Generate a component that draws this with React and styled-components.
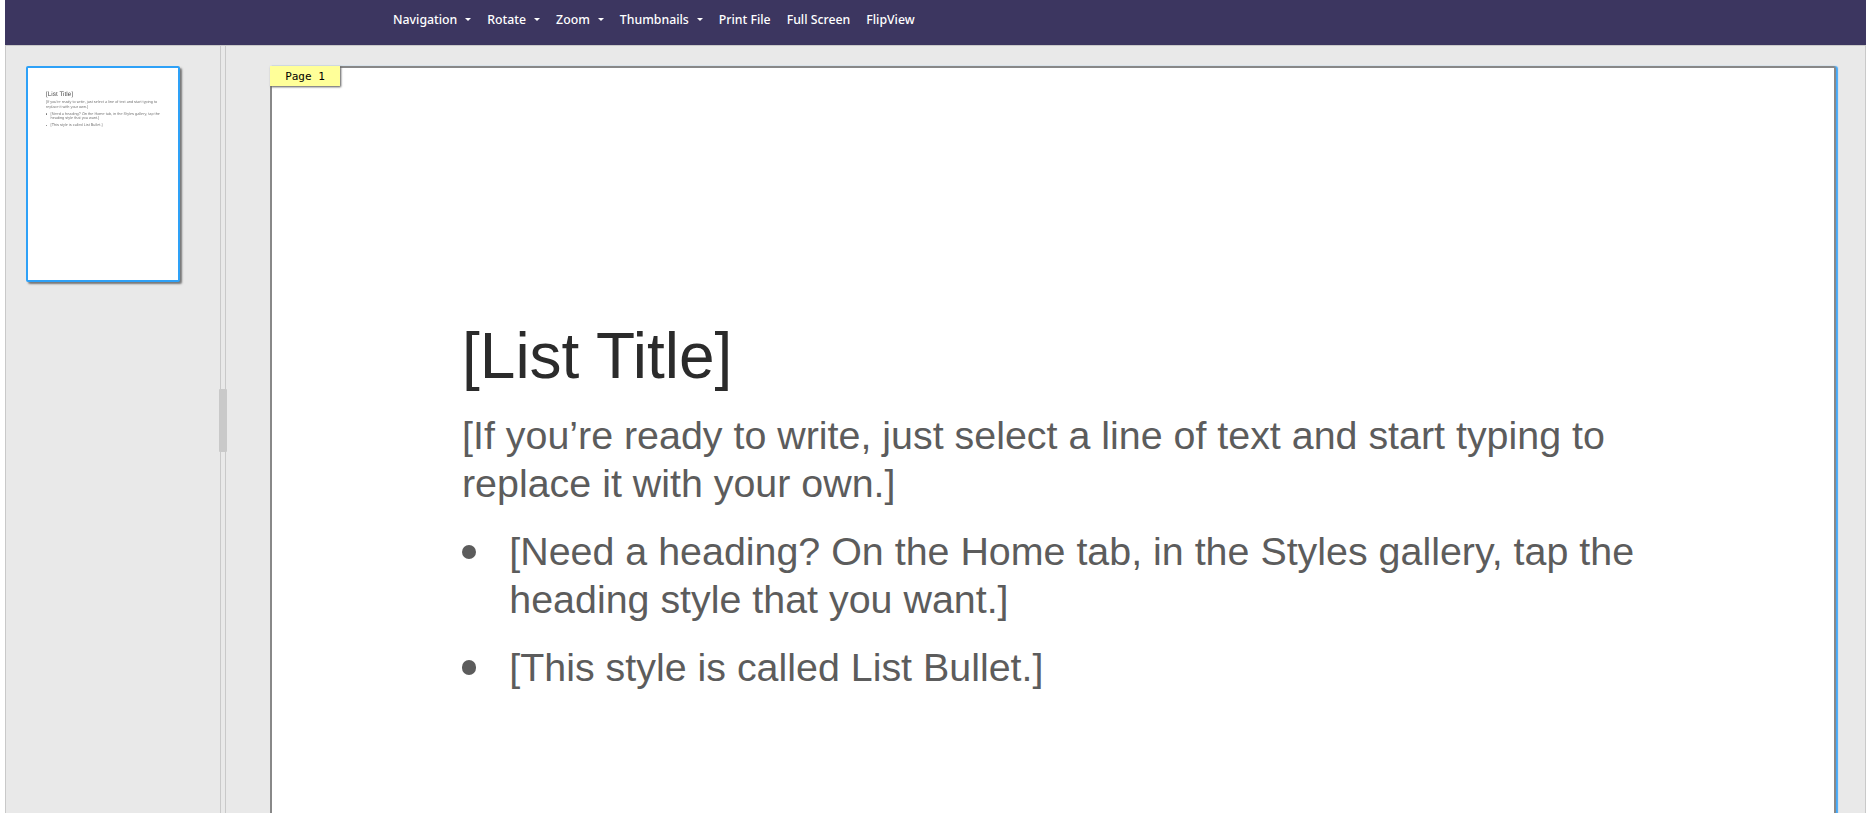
import React from "react";
import styled, { createGlobalStyle } from "styled-components";

const GlobalStyle = createGlobalStyle`
  html, body {
    margin: 0;
    height: 100%;
    background: #fff;
    overflow: hidden;
  }
  #root {
    height: 100%;
  }
`;

const Viewer = styled.div`
  height: 813px;
  margin-left: 5px;
  display: flex;
  flex-direction: column;
  font-family: "Liberation Sans", Arial, sans-serif;
`;

const Toolbar = styled.nav`
  height: 45px;
  flex: none;
  display: flex;
  align-items: flex-start;
  padding-left: 388px;
  gap: 16px;
  background: #3c3660;
  border-bottom: 1px solid #c9c9c9;
`;

const MenuItem = styled.div`
  display: flex;
  align-items: center;
  height: 38px;
  color: #fff;
  font-family: "Noto Sans", "Open Sans", sans-serif;
  font-size: 12.3px;
  font-weight: 500;
  white-space: nowrap;
`;

const Caret = styled.span`
  width: 0;
  height: 0;
  margin-left: 8px;
  border-left: 3px solid transparent;
  border-right: 3px solid transparent;
  border-top: 3px solid #fff;
`;

const Workspace = styled.div`
  flex: 1;
  min-height: 0;
  display: flex;
  background: #e9e9e9;
  border-left: 1px solid #c9c9c9;
  border-right: 1px solid #c9c9c9;
`;

const ThumbPanel = styled.aside`
  width: 214px;
  flex: none;
  padding: 20px 0 0 20px;
  box-sizing: border-box;
`;

const Thumbnail = styled.div`
  width: 154px;
  height: 216px;
  box-sizing: border-box;
  padding: 23px 14px 0 18px;
  background: #fff;
  border: 2px solid #2ea1f7;
  border-radius: 2px;
  box-shadow: 2px 2px 2px #777;
  overflow: hidden;
`;

/* the thumbnail is a scaled bitmap in the original, so its text is soft */
const ThumbContent = styled.div`
  filter: blur(0.25px);
  opacity: 0.85;
  text-rendering: geometricPrecision;
`;

const Splitter = styled.div`
  position: relative;
  width: 4px;
  flex: none;
  border-left: 1px solid #c9c9c9;
  border-right: 1px solid #c9c9c9;
`;

const SplitHandle = styled.div`
  position: absolute;
  left: -2px;
  top: 343px;
  width: 8px;
  height: 63px;
  background: #c9c9c9;
  border-radius: 1px;
`;

const PageArea = styled.main`
  flex: 1;
  min-width: 0;
  overflow: hidden;
  padding: 20px 29px 0 44px;
`;

const Page = styled.section`
  position: relative;
  height: 900px;
  box-sizing: border-box;
  padding: 250px 150px 0 190px;
  background: #fff;
  border: solid #888;
  border-width: 2px 2px 0 2px;
  border-top-right-radius: 3px;
  box-shadow: 2px 0 1px #45a9f8;
`;

const PageTag = styled.div`
  position: absolute;
  left: -2px;
  top: -2px;
  width: 70px;
  height: 20px;
  display: flex;
  align-items: center;
  justify-content: center;
  background: #ffff99;
  box-shadow: 1px 1px 2px #555;
  color: #000;
  font-family: "DejaVu Sans Mono", monospace;
  font-size: 11px;
`;

const DocTitle = styled.h1`
  margin: 0 0 ${(p) => p.$size * 0.255}px;
  color: #2b2b2b;
  font-size: ${(p) => p.$size}px;
  line-height: 1.2;
  font-weight: 400;
`;

const DocText = styled.p`
  margin: 0;
  color: #5c5c5c;
  font-size: ${(p) => p.$size}px;
  line-height: 1.22;
`;

const BulletList = styled.ul`
  list-style: none;
  margin: ${(p) => p.$size * 0.5}px 0 0;
  padding: 0;
  color: #5c5c5c;
  font-size: ${(p) => p.$size}px;
  line-height: 1.22;
`;

const BulletItem = styled.li`
  position: relative;
  padding-left: 1.2em;
  margin-bottom: 0.5em;
  &::before {
    content: "";
    position: absolute;
    left: 0;
    top: 0.45em;
    width: 0.36em;
    height: 0.36em;
    border-radius: 50%;
    background: #5c5c5c;
  }
`;

const menu = [
  { label: "Navigation", caret: true },
  { label: "Rotate", caret: true },
  { label: "Zoom", caret: true },
  { label: "Thumbnails", caret: true },
  { label: "Print File" },
  { label: "Full Screen" },
  { label: "FlipView" },
];

function DocContent({ titleSize, textSize }) {
  return (
    <>
      <DocTitle $size={titleSize}>[List Title]</DocTitle>
      <DocText $size={textSize}>
        [If you’re ready to write, just select a line of text and start typing to replace it with your own.]
      </DocText>
      <BulletList $size={textSize}>
        <BulletItem>[Need a heading? On the Home tab, in the Styles gallery, tap the heading style that you want.]</BulletItem>
        <BulletItem>[This style is called List Bullet.]</BulletItem>
      </BulletList>
    </>
  );
}

export default function App() {
  return (
    <Viewer>
      <GlobalStyle />
      <Toolbar>
        {menu.map((item) => (
          <MenuItem key={item.label}>
            {item.label}
            {item.caret && <Caret />}
          </MenuItem>
        ))}
      </Toolbar>
      <Workspace>
        <ThumbPanel>
          <Thumbnail>
            <ThumbContent>
              <DocContent titleSize={6.4} textSize={3.84} />
            </ThumbContent>
          </Thumbnail>
        </ThumbPanel>
        <Splitter>
          <SplitHandle />
        </Splitter>
        <PageArea>
          <Page>
            <PageTag>Page 1</PageTag>
            <DocContent titleSize={64} textSize={39.4} />
          </Page>
        </PageArea>
      </Workspace>
    </Viewer>
  );
}
